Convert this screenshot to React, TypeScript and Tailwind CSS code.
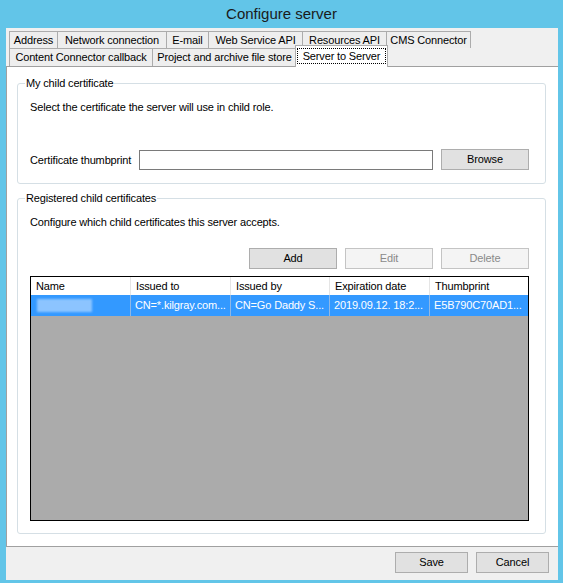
import type { ReactNode } from 'react'

const rowOne = [
  { label: 'Address', w: 'w-[48px]' },
  { label: 'Network connection', w: 'w-[109px]' },
  { label: 'E-mail', w: 'w-[42px]' },
  { label: 'Web Service API', w: 'w-[94px]' },
  { label: 'Resources API', w: 'w-[84px]' },
  { label: 'CMS Connector', w: 'w-[85px] border-r' },
]

const rowTwo = [
  { label: 'Content Connector callback', w: 'w-[143px]' },
  { label: 'Project and archive file store', w: 'w-[144px]' },
]

const columns = [
  { label: 'Name', w: 'w-[100px] border-r' },
  { label: 'Issued to', w: 'w-[100px] border-r' },
  { label: 'Issued by', w: 'w-[99px] border-r' },
  { label: 'Expiration date', w: 'w-[100px] border-r' },
  { label: 'Thumbprint', w: 'flex-1' },
]

const row = ['CN=*.kilgray.com...', 'CN=Go Daddy S...', '2019.09.12. 18:2...', 'E5B790C70AD1...']

function Button({ children, className = '', disabled = false }: { children: ReactNode; className?: string; disabled?: boolean }) {
  return (
    <div
      className={`h-[21px] flex items-center justify-center border ${
        disabled ? 'bg-[#f4f4f4] border-[#c4c4c4] text-[#8a8a8a]' : 'bg-[#e1e1e1] border-[#adadad] text-black'
      } ${className}`}
    >
      {children}
    </div>
  )
}

function GroupBox({ title, className = '', children }: { title: string; className?: string; children: ReactNode }) {
  return (
    <fieldset className={`w-[529px] ml-[10px] border border-[#d5dfe5] rounded-[3px] ${className}`}>
      <legend className="ml-[7px] px-[1px] leading-[13px]">{title}</legend>
      {children}
    </fieldset>
  )
}

export default function App() {
  return (
    <div className="w-[563px] h-[583px] bg-[#62c5e8] flex flex-col font-['Liberation_Sans',Arial,sans-serif] text-[11px] tracking-[-0.15px] text-black">
      <div className="h-[28px] flex items-center justify-center text-[15px] tracking-normal text-[#1a1a1a]">Configure server</div>

      <div className="flex-1 ml-[6px] mr-[5px] mb-[3px] bg-[#f0f0f0] flex flex-col">
        {/* tab strip */}
        <div className="pl-[3px] pt-[3px] flex flex-col">
          <div className="flex h-[17px]">
            {rowOne.map((t) => (
              <div key={t.label} className={`${t.w} h-full flex items-center justify-center border-t border-l border-[#acacac] bg-[#eeeeee] whitespace-nowrap`}>
                {t.label}
              </div>
            ))}
          </div>
          <div className="flex h-[18px]">
            {rowTwo.map((t) => (
              <div key={t.label} className={`${t.w} h-full flex items-center justify-center border-t border-l border-[#acacac] bg-[#eeeeee] whitespace-nowrap`}>
                {t.label}
              </div>
            ))}
            <div className="relative z-10 -ml-[1px] -mt-[3px] w-[93px] h-[22px] flex bg-white border-t border-l border-r border-[#acacac] pt-[2px] px-[1px] pb-[3px]">
              <div className="flex-1 flex items-center justify-center border border-dotted border-black whitespace-nowrap">
                Server to Server
              </div>
            </div>
          </div>
        </div>

        {/* tab page */}
        <div className="flex-1 bg-white border-t border-l border-[#a0a0a0] flex flex-col">
          <GroupBox title="My child certificate" className="mt-[10px]">
            <div className="pl-[12px] pr-[16px] pb-[13px]">
              <div className="mt-[11px] leading-[13px]">Select the certificate the server will use in child role.</div>
              <div className="mt-[35px] flex items-end">
                <div className="w-[109px] leading-[13px] mb-[3px]">Certificate thumbprint</div>
                <div className="w-[294px] h-[20px] border border-[#7a7a7a] bg-white" />
                <Button className="ml-[8px] w-[88px]">Browse</Button>
              </div>
            </div>
          </GroupBox>

          <GroupBox title="Registered child certificates" className="mt-[8px]">
            <div className="pl-[12px] pr-[16px] pb-[12px]">
              <div className="mt-[11px] leading-[13px]">Configure which child certificates this server accepts.</div>
              <div className="mt-[19px] flex justify-end gap-[8px]">
                <Button className="w-[88px]">Add</Button>
                <Button className="w-[88px]" disabled>Edit</Button>
                <Button className="w-[88px]" disabled>Delete</Button>
              </div>
              <div className="mt-[7px] h-[245px] border border-black bg-[#ababab] flex flex-col">
                <div className="h-[18px] bg-white flex">
                  {columns.map((c) => (
                    <div key={c.label} className={`${c.w} h-full border-[#e5e5e5] pl-[5px] flex items-center whitespace-nowrap`}>
                      {c.label}
                    </div>
                  ))}
                </div>
                <div className="h-[21px] bg-[#3399ff] text-white flex">
                  <div className="w-[100px] h-full border-r border-[#8fb8e6] pl-[6px] flex items-center">
                    <div className="w-[55px] h-[13px] bg-[#8cc4ff] blur-[1px]" />
                  </div>
                  {row.map((v, i) => (
                    <div
                      key={v}
                      className={`${columns[i + 1].w} h-full border-[#8fb8e6] pl-[4px] flex items-center whitespace-nowrap overflow-hidden`}
                    >
                      {v}
                    </div>
                  ))}
                </div>
              </div>
            </div>
          </GroupBox>
        </div>

        {/* footer */}
        <div className="h-[34px] border-t border-[#a0a0a0] flex justify-end items-start pt-[5px] pr-[9px] gap-[8px]">
          <Button className="w-[73px] border-[#3c7fb1]">Save</Button>
          <Button className="w-[73px]">Cancel</Button>
        </div>
      </div>
    </div>
  )
}
